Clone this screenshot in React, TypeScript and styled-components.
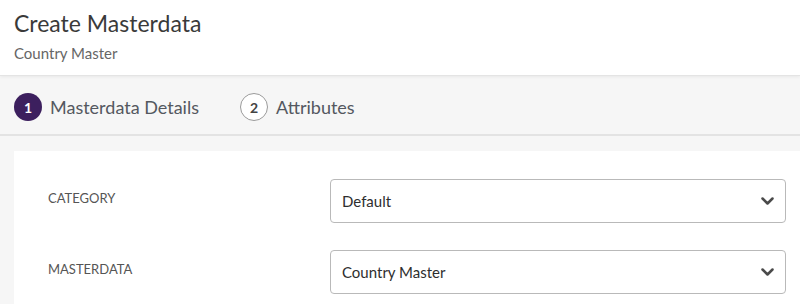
import React from 'react'
import styled, { createGlobalStyle } from 'styled-components'

const GlobalStyle = createGlobalStyle`
  html, body {
    margin: 0;
    padding: 0;
    background: #f6f6f6;
    font-family: Lato, "Open Sans", "Liberation Sans", sans-serif;
    overflow: hidden;
  }
`

const Page = styled.div`
  width: 800px;
  height: 304px;
  display: flex;
  flex-direction: column;
  background: #f6f6f6;
`

const Header = styled.header`
  height: 76px;
  background: #fff;
  padding: 8px 14px 0;
  box-sizing: border-box;
  border-bottom: 1px solid #e4e4e4;
  box-shadow: 0 1px 3px rgba(0, 0, 0, 0.06);
  position: relative;
  z-index: 1;
`

const Title = styled.h1`
  margin: 0;
  font-size: 23px;
  font-weight: 400;
  color: #3a3a3a;
  line-height: 30px;
`

const Subtitle = styled.div`
  margin-top: 6px;
  font-size: 15px;
  color: #666;
  line-height: 18px;
`

const Steps = styled.nav`
  height: 60px;
  display: flex;
  align-items: center;
  gap: 41px;
  padding: 4px 14px 0;
  background: #f6f6f6;
  border-bottom: 2px solid #e3e3e3;
  box-sizing: border-box;
`

const Step = styled.div`
  display: flex;
  align-items: center;
  gap: 8px;
  font-size: 18px;
  color: #545860;
`

const StepNumber = styled.span<{ $active?: boolean }>`
  width: 28px;
  height: 28px;
  border-radius: 50%;
  box-sizing: border-box;
  display: flex;
  align-items: center;
  justify-content: center;
  font-size: 14px;
  font-weight: 700;
  background: ${({ $active }) => ($active ? '#3c1f5e' : '#fff')};
  color: ${({ $active }) => ($active ? '#fff' : '#444')};
  border: ${({ $active }) => ($active ? 'none' : '1.5px solid #9a9a9a')};
`

const Body = styled.main`
  flex: 1;
  padding: 15px 0 0 14px;
`

const Card = styled.section`
  background: #fff;
  height: 100%;
  padding: 28px 14px 0 34px;
  box-sizing: border-box;
  display: flex;
  flex-direction: column;
  gap: 27px;
`

const Row = styled.div`
  display: flex;
  align-items: center;
`

const Label = styled.label`
  width: 282px;
  font-size: 13px;
  color: #555;
  text-transform: uppercase;
  padding-bottom: 6px;
`

const Select = styled.div`
  flex: 1;
  height: 44px;
  border: 1px solid #b9b9b9;
  border-radius: 4px;
  box-sizing: border-box;
  display: flex;
  align-items: center;
  justify-content: space-between;
  padding: 0 11px 0 11px;
  font-size: 15px;
  color: #2e2e2e;
  background: #fff;
`

const Chevron = () => (
  <svg width="13" height="8" viewBox="0 0 13 8" fill="none">
    <path d="M1.5 1.5 L6.5 6.5 L11.5 1.5" stroke="#4a4a4a" strokeWidth="2.5" strokeLinecap="round" strokeLinejoin="round" />
  </svg>
)

const fields = [
  { label: 'Category', value: 'Default' },
  { label: 'Masterdata', value: 'Country Master' },
]

export default function App() {
  return (
    <Page>
      <GlobalStyle />
      <Header>
        <Title>Create Masterdata</Title>
        <Subtitle>Country Master</Subtitle>
      </Header>
      <Steps>
        <Step>
          <StepNumber $active>1</StepNumber>
          Masterdata Details
        </Step>
        <Step>
          <StepNumber>2</StepNumber>
          Attributes
        </Step>
      </Steps>
      <Body>
        <Card>
          {fields.map((f) => (
            <Row key={f.label}>
              <Label>{f.label}</Label>
              <Select>
                {f.value}
                <Chevron />
              </Select>
            </Row>
          ))}
        </Card>
      </Body>
    </Page>
  )
}
